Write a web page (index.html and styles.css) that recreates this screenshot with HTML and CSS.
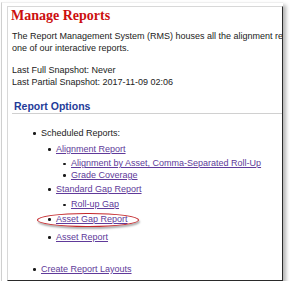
FILE: index.html
```html
<!DOCTYPE html>
<html>
<head>
<meta charset="utf-8">
<link rel="stylesheet" href="styles.css">
</head>
<body>
<div class="shot">
  <div class="page">
    <h1 class="title">Manage Reports</h1>
    <p class="intro">The Report Management System (RMS) houses all the alignment reports<br>one of our interactive reports.</p>
    <p class="snap">Last Full Snapshot: Never<br>Last Partial Snapshot: 2017-11-09 02:06</p>
    <h2 class="section">Report Options</h2>
    <ul class="l1">
      <li class="i-sched">Scheduled Reports:
        <ul class="l2">
          <li class="i-align"><a href="#">Alignment Report</a>
            <ul class="l3">
              <li class="i-abya"><a href="#">Alignment by Asset, Comma-Separated Roll-Up</a></li>
              <li><a href="#">Grade Coverage</a></li>
            </ul>
          </li>
          <li class="i-std"><a href="#">Standard Gap Report</a>
            <ul class="l3">
              <li class="i-roll"><a href="#">Roll-up Gap</a></li>
            </ul>
          </li>
          <li class="i-agap"><a href="#">Asset Gap Report</a><span class="ring"></span></li>
          <li class="i-asset"><a href="#">Asset Report</a></li>
        </ul>
      </li>
      <li class="i-create"><a href="#">Create Report Layouts</a></li>
    </ul>
  </div>
</div>
</body>
</html>
```

FILE: styles.css
```css
html, body {
  margin: 0;
  padding: 0;
  background: #fff;
}

body {
  padding: 2px 0 0 1px;
  font-family: "Liberation Sans", Arial, sans-serif;
  color: #222;
}

.shot {
  box-sizing: border-box;
  width: 282px;
  height: 279px;
  border-left: 1px solid #cfcfcf;
  border-top: 1px solid #efefef;
  padding: 3px 0 0 5px;
  box-shadow: 3px 3px 4px rgba(0, 0, 0, 0.3);
  background: #fff;
}

.page {
  box-sizing: border-box;
  width: 276px;
  height: 275px;
  border-left: 1px solid #d8d8d8;
  border-top: 1px solid #d8d8d8;
  border-right: 1px solid #2a2a2a;
  border-bottom: 1px solid #2a2a2a;
  padding: 1px 0 0 4px;
  overflow: hidden;
  background: #fff;
}

.title {
  margin: 0 0 0 -1px;
  font-family: "Liberation Serif", "Times New Roman", serif;
  font-size: 14px;
  line-height: 16px;
  font-weight: bold;
  color: #cc0f0f;
}

.intro,
.snap {
  margin: 0;
  font-size: 9px;
  line-height: 11.6px;
  white-space: nowrap;
}

.intro {
  margin-top: 7.4px;
}

.snap {
  margin-top: 10.8px;
}

.section {
  margin: 11.6px 0 0 0;
  padding: 0 0 0 2px;
  font-size: 10.5px;
  line-height: 13px;
  font-weight: bold;
  color: #1f3c99;
  border-bottom: 1px solid #d0d0d0;
}

ul {
  list-style: none;
  margin: 0;
  padding: 0;
  font-size: 9px;
  line-height: 11.6px;
}

.l1 {
  padding-left: 29px;
  margin-top: 13.8px;
}

.l2,
.l3 {
  padding-left: 15px;
}

li {
  white-space: nowrap;
}

li::before {
  content: "";
  display: inline-block;
  width: 2.6px;
  height: 2.6px;
  border-radius: 50%;
  background: #1a1a1a;
  margin-left: -8px;
  margin-right: 5.4px;
  vertical-align: middle;
}

a {
  color: #603a9a;
  text-decoration: underline;
}

.i-align { margin-top: 4.4px; }
.i-abya { margin-top: 2.7px; }
.i-std { margin-top: 2.4px; }
.i-roll { margin-top: 3.8px; }
.i-agap { margin-top: 3px; position: relative; }
.i-asset { margin-top: 6.4px; }
.i-create { margin-top: 20.4px; }

.ring {
  position: absolute;
  left: -19px;
  top: -1px;
  width: 100px;
  height: 12.5px;
  border: 1.5px solid #c4282c;
  border-radius: 50%;
  box-shadow: 1px 2px 2px rgba(0, 0, 0, 0.3);
}
```
